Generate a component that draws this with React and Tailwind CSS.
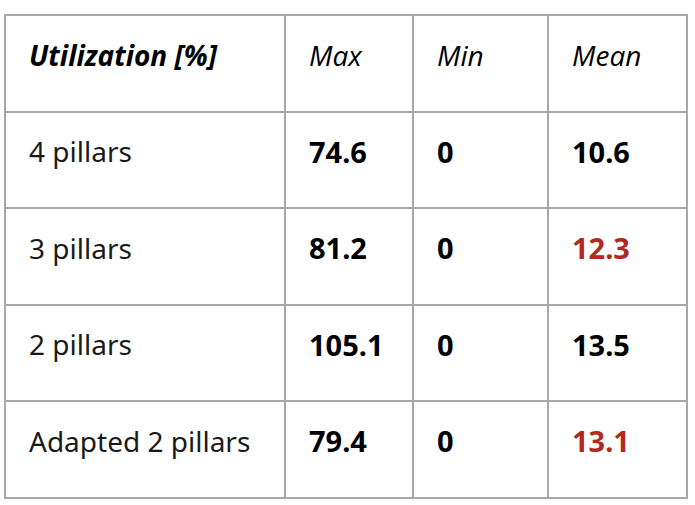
const rows = [
  { label: "4 pillars", max: "74.6", min: "0", mean: "10.6", hot: false },
  { label: "3 pillars", max: "81.2", min: "0", mean: "12.3", hot: true },
  { label: "2 pillars", max: "105.1", min: "0", mean: "13.5", hot: false },
  { label: "Adapted 2 pillars", max: "79.4", min: "0", mean: "13.1", hot: true },
];

const cell = "h-[96.5px] border-2 border-[#a8a8a8] pl-[23px] pb-[17px] align-middle";

export default function App() {
  return (
    <div className="min-h-screen bg-white pl-[4px] pt-[14px]" style={{ fontFamily: '"Noto Sans", sans-serif' }}>
      <table className="w-[682px] table-fixed border-collapse text-left text-[28px] leading-none text-[#1a1a1a]">
        <colgroup>
          <col className="w-[280px]" />
          <col className="w-[128px]" />
          <col className="w-[135px]" />
          <col className="w-[139px]" />
        </colgroup>
        <thead>
          <tr>
            <th className={`${cell} font-['Open_Sans',sans-serif] text-[28px] font-bold italic text-black`}>Utilization [%]</th>
            <th className={`${cell} font-['Open_Sans',sans-serif] text-[28px] font-normal italic text-black`}>Max</th>
            <th className={`${cell} font-['Open_Sans',sans-serif] text-[28px] font-normal italic text-black`}>Min</th>
            <th className={`${cell} font-['Open_Sans',sans-serif] text-[28px] font-normal italic text-black`}>Mean</th>
          </tr>
        </thead>
        <tbody>
          {rows.map((r) => (
            <tr key={r.label}>
              <td className={cell}>{r.label}</td>
              <td className={`${cell} text-[29px] font-bold text-black`}>{r.max}</td>
              <td className={`${cell} text-[29px] font-bold text-black`}>{r.min}</td>
              <td className={`${cell} text-[29px] font-bold ${r.hot ? "text-[#b3291f]" : "text-black"}`}>{r.mean}</td>
            </tr>
          ))}
        </tbody>
      </table>
    </div>
  );
}
